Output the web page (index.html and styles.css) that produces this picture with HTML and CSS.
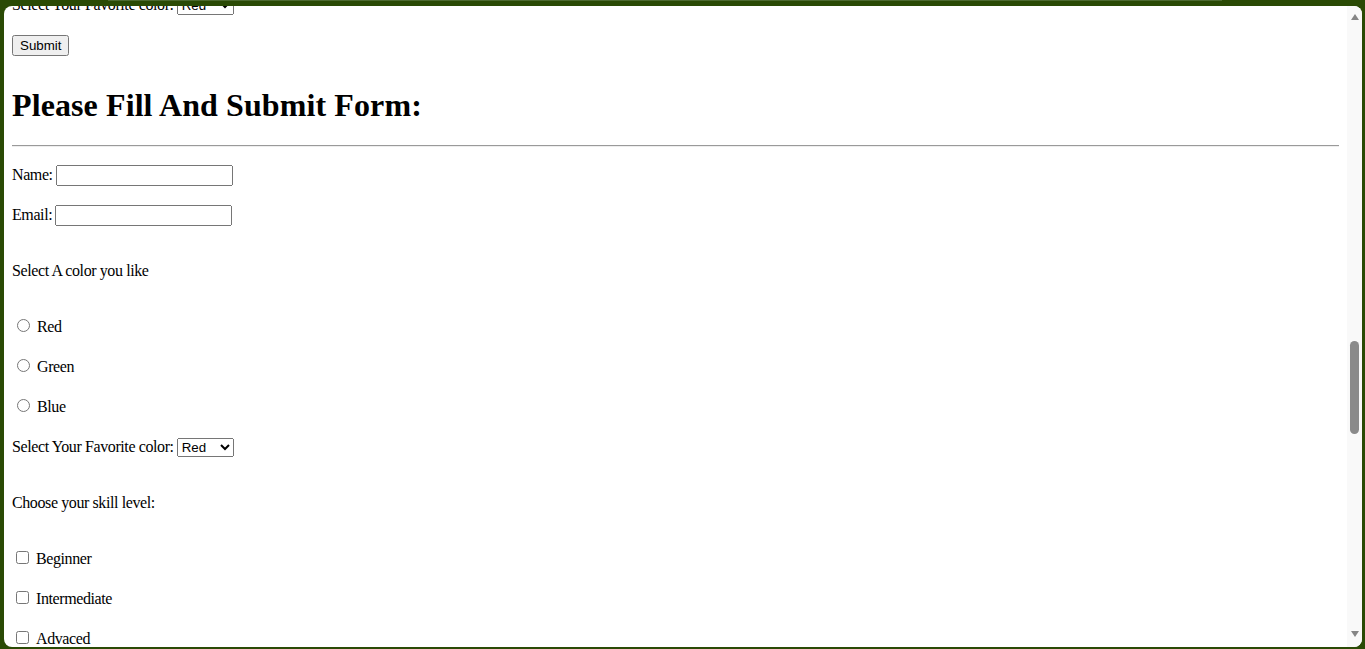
FILE: index.html
```html
<!DOCTYPE html>
<html lang="en">
<head>
<meta charset="utf-8">
<title>Form</title>
<link rel="stylesheet" href="styles.css">
</head>
<body>
<div class="frame">
  <div class="topline"></div>
  <div class="window">
    <div class="viewport">
      <div class="page">
        <form class="form">
          <div class="row">Select Your Favorite color:<select class="pick"><option>Red</option><option>Green</option><option>Blue</option></select></div>
          <div class="row"><button type="button" class="btn">Submit</button></div>
        </form>
        <h1 class="title">Please Fill And Submit Form:</h1>
        <hr class="rule">
        <form class="form">
          <div class="row">Name:<input type="text" class="field"></div>
          <div class="row">Email:<input type="email" class="field"></div>
          <div class="row spaced">Select A color you like</div>
          <div class="row spaced"><input type="radio" name="c" class="radio"><span class="lbl">Red</span></div>
          <div class="row"><input type="radio" name="c" class="radio"><span class="lbl">Green</span></div>
          <div class="row"><input type="radio" name="c" class="radio"><span class="lbl">Blue</span></div>
          <div class="row">Select Your Favorite color:<select class="pick"><option>Red</option><option>Green</option><option>Blue</option></select></div>
          <div class="row spaced">Choose your skill level:</div>
          <div class="row spaced"><input type="checkbox" class="check"><span class="lbl">Beginner</span></div>
          <div class="row"><input type="checkbox" class="check"><span class="lbl">Intermediate</span></div>
          <div class="row"><input type="checkbox" class="check"><span class="lbl">Advaced</span></div>
        </form>
      </div>
    </div>
    <div class="scrollbar">
      <div class="arrow up"><span class="tri tri-up"></span></div>
      <div class="track"><div class="thumb"></div></div>
      <div class="arrow down"><span class="tri tri-down"></span></div>
    </div>
  </div>
</div>
</body>
</html>
```

FILE: styles.css
```css
html, body {
  margin: 0;
  padding: 0;
}
body {
  background: #2a4a05;
  font-family: "Liberation Serif", "Times New Roman", serif;
  font-size: 16px;
  color: #000;
  overflow: hidden;
}
.frame {
  position: relative;
  height: 649px;
  box-sizing: border-box;
  padding: 6px 3px 2px 4px;
}
.topline {
  position: absolute;
  left: 108px;
  top: 0;
  width: 1114px;
  height: 1px;
  background: #4d6a30;
}
.window {
  display: flex;
  height: 641px;
  background: #fff;
  border-radius: 8px;
  overflow: hidden;
}
.viewport {
  flex: 1;
  overflow: hidden;
}
.page {
  padding: 0 8px;
  margin-top: -13px;
}
.form {
  margin: 0;
}
.row {
  display: flex;
  align-items: center;
  height: 24px;
  margin: 16px 0;
  white-space: nowrap;
  letter-spacing: -0.4px;
}
.form:first-child .row:first-child {
  margin-top: 0;
}
.row.spaced {
  margin-top: 32px;
}
.pick {
  margin: 0 0 0 3px;
  width: 57px;
  height: 19px;
  letter-spacing: normal;
  font: 13.333px "Liberation Sans", Arial, sans-serif;
}
.btn {
  margin: 0;
  letter-spacing: normal;
  font: 13.333px "Liberation Sans", Arial, sans-serif;
  height: 21px;
}
.field {
  margin: 0 0 0 3px;
  width: 177px;
  height: 21px;
  box-sizing: border-box;
  font: 13.333px "Liberation Sans", Arial, sans-serif;
}
.radio {
  margin: 0 7px 4px 5px;
  width: 13px;
  height: 13px;
}
.check {
  margin: 0 7px 4px 4px;
  width: 13px;
  height: 13px;
}
.title {
  font-size: 32px;
  line-height: 37px;
  font-weight: bold;
  letter-spacing: 0.1px;
  margin: 30px 0 0;
}
.rule {
  margin: 21px 0 16px;
  border: 0;
  border-top: 1px solid #9a9a9a;
  border-bottom: 1px solid #eeeeee;
  height: 0;
}
.scrollbar {
  width: 15px;
  background: #f9f9f9;
  display: flex;
  flex-direction: column;
}
.arrow {
  display: flex;
  align-items: center;
  justify-content: center;
}
.arrow.up {
  height: 22px;
}
.arrow.down {
  height: 26px;
}
.track {
  flex: 1;
}
.thumb {
  margin: 313px 3px 0;
  height: 93px;
  border-radius: 5px;
  background: #8a8a8a;
}
.tri {
  width: 0;
  height: 0;
  border-left: 4.5px solid transparent;
  border-right: 4.5px solid transparent;
}
.tri-up {
  border-bottom: 6px solid #858585;
}
.tri-down {
  border-top: 6px solid #858585;
}
```
